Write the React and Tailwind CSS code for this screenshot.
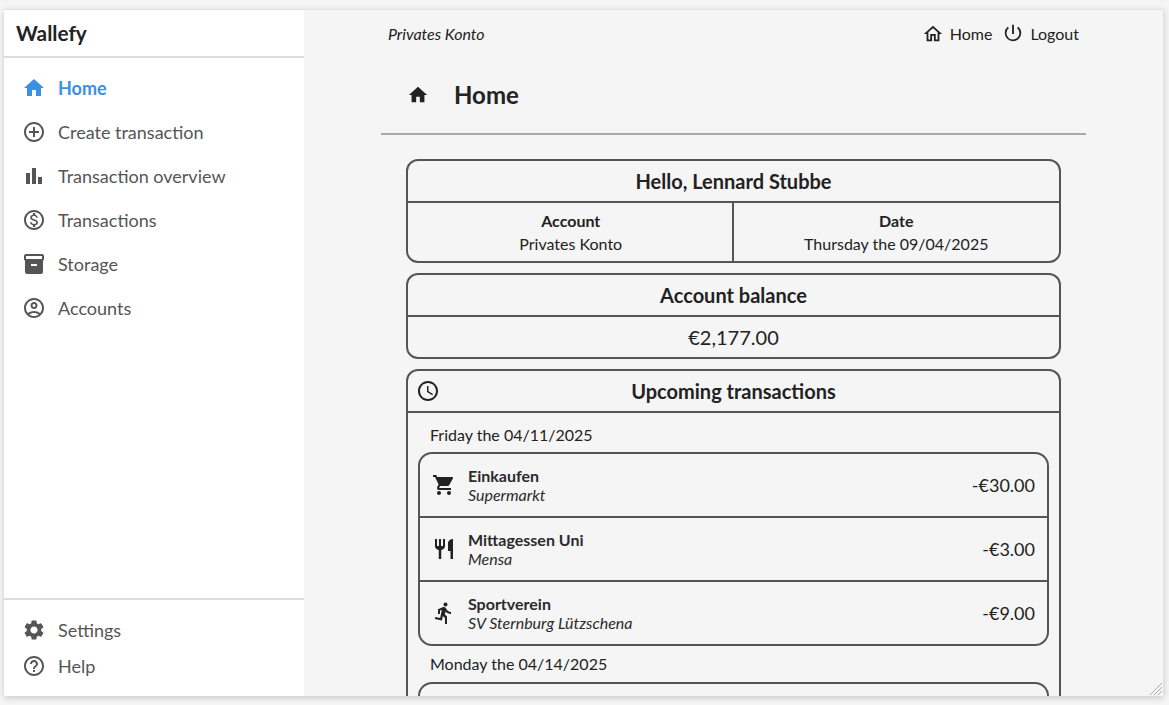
import {
    MdHome,
    MdAddCircleOutline,
    MdBarChart,
    MdOutlineMonetizationOn,
    MdInventory2,
    MdOutlineAccountCircle,
    MdSettings,
    MdHelpOutline,
    MdOutlineHome,
    MdPowerSettingsNew,
    MdAccessTime,
    MdShoppingCart,
    MdRestaurant,
    MdDirectionsRun,
} from "react-icons/md";

const NavItem = ({ icon: Icon, label, active }) => {
    return (
        <div className="flex items-center pl-[18px]">
            <Icon size={24} className={active ? "text-[#3b8fe4]" : "text-[#555555]"} />
            <span className={`ml-[12px] text-[18px] leading-[22px] ${active ? "font-bold text-[#3b8fe4]" : "text-[#555555]"}`}>{label}</span>
        </div>
    );
};

const Transaction = ({ icon: Icon, title, sub, amount, last }) => {
    return (
        <div className={`flex items-center px-[12px] ${last ? "h-[62px]" : "h-[64px] border-b-2 border-[#555555]"}`}>
            <Icon size={24} className="text-[#222222]" />
            <div className="ml-[12px] flex-1">
                <div className="text-[16px] leading-[19px] font-bold text-[#2b2b2b]">{title}</div>
                <div className="text-[16px] leading-[19px] text-[#2b2b2b] italic">{sub}</div>
            </div>
            <div className="text-[18px] text-[#222222]">{amount}</div>
        </div>
    );
};

const App = () => {
    return (
        <div className="h-[705px] overflow-hidden bg-[#f5f5f5] pt-[9px] pl-[4px] font-['Lato',sans-serif]">
            <div className="relative flex h-[687px] w-[1160px] border-t border-r border-[#e2e2e2] shadow-[0_2px_6px_rgba(0,0,0,0.18)]">
                <aside className="flex w-[300px] flex-col bg-white">
                    <div className="flex h-[48px] items-center border-b-[2px] border-[#dddddd] pb-[1px] pl-[12px] text-[20.8px] font-bold text-[#222222]">Wallefy</div>
                    <nav className="flex flex-1 flex-col gap-[20px] pt-[18px]">
                        <NavItem icon={MdHome} label="Home" active />
                        <NavItem icon={MdAddCircleOutline} label="Create transaction" />
                        <NavItem icon={MdBarChart} label="Transaction overview" />
                        <NavItem icon={MdOutlineMonetizationOn} label="Transactions" />
                        <NavItem icon={MdInventory2} label="Storage" />
                        <NavItem icon={MdOutlineAccountCircle} label="Accounts" />
                    </nav>
                    <div className="flex h-[98px] flex-col gap-[12px] border-t-[2px] border-[#dddddd] pt-[18px]">
                        <NavItem icon={MdSettings} label="Settings" />
                        <NavItem icon={MdHelpOutline} label="Help" />
                    </div>
                </aside>
                <main className="flex-1 overflow-hidden bg-[#f5f5f5]">
                    <div className="mx-auto w-[705px]">
                        <div className="flex h-[48px] items-center justify-between px-[7px] text-[#222222]">
                            <span className="text-[16px] italic">Privates Konto</span>
                            <div className="flex items-center">
                                <MdOutlineHome size={22} />
                                <span className="ml-[6px] text-[16px]">Home</span>
                                <MdPowerSettingsNew size={22} className="ml-[10px] -translate-y-[1px]" />
                                <span className="ml-[6px] text-[16px]">Logout</span>
                            </div>
                        </div>
                        <div className="flex h-[77px] items-center border-b-2 border-[#aaaaaa] pb-[2px] pl-[26px]">
                            <MdHome size={22} className="text-[#222222]" />
                            <h1 className="ml-[25px] text-[24px] font-bold text-[#222222]">Home</h1>
                        </div>
                        <div className="flex flex-col gap-[10px] px-[25px] pt-[24px]">
                            <section className="rounded-[12px] border-2 border-[#555555] text-[#222222]">
                                <h2 className="flex h-[42px] items-center justify-center border-b-2 border-[#555555] text-[20px] font-bold">Hello, Lennard Stubbe</h2>
                                <div className="grid h-[58px] grid-cols-2 text-center text-[16px] leading-[23px]">
                                    <div className="pt-[6px]">
                                        <div className="font-bold">Account</div>
                                        <div>Privates Konto</div>
                                    </div>
                                    <div className="-ml-[2px] border-l-2 border-[#555555] pt-[6px]">
                                        <div className="font-bold">Date</div>
                                        <div>Thursday the 09/04/2025</div>
                                    </div>
                                </div>
                            </section>
                            <section className="rounded-[12px] border-2 border-[#555555] text-[#222222]">
                                <h2 className="flex h-[42px] items-center justify-center border-b-2 border-[#555555] text-[20px] font-bold">Account balance</h2>
                                <div className="flex h-[40px] items-center justify-center text-[20px]">€2,177.00</div>
                            </section>
                            <section className="rounded-[12px] border-2 border-[#555555] text-[#222222]">
                                <h2 className="relative flex h-[42px] items-center justify-center border-b-2 border-[#555555] text-[20px] font-bold">
                                    <MdAccessTime size={24} className="absolute top-[8px] left-[8px]" />
                                    Upcoming transactions
                                </h2>
                                <div className="px-[10px]">
                                    <div className="flex h-[39px] items-end pb-[8px] pl-[12px] text-[16px] leading-[19px]">Friday the 04/11/2025</div>
                                    <div className="rounded-[14px] border-2 border-[#555555]">
                                        <Transaction icon={MdShoppingCart} title="Einkaufen" sub="Supermarkt" amount="-€30.00" />
                                        <Transaction icon={MdRestaurant} title="Mittagessen Uni" sub="Mensa" amount="-€3.00" />
                                        <Transaction icon={MdDirectionsRun} title="Sportverein" sub="SV Sternburg Lützschena" amount="-€9.00" last />
                                    </div>
                                    <div className="flex h-[36px] items-center pb-[2px] pl-[12px] text-[16px] leading-[19px]">Monday the 04/14/2025</div>
                                    <div className="h-[40px] rounded-[14px] border-2 border-[#555555]"></div>
                                </div>
                            </section>
                        </div>
                    </div>
                </main>
                <svg className="absolute right-[1px] bottom-[1px]" width="13" height="13" viewBox="0 0 13 13" stroke="#aaaaaa" strokeWidth="1">
                    <path d="M13 1 L1 13 M13 5 L5 13 M13 9 L9 13" />
                </svg>
            </div>
        </div>
    );
};

export default App;
